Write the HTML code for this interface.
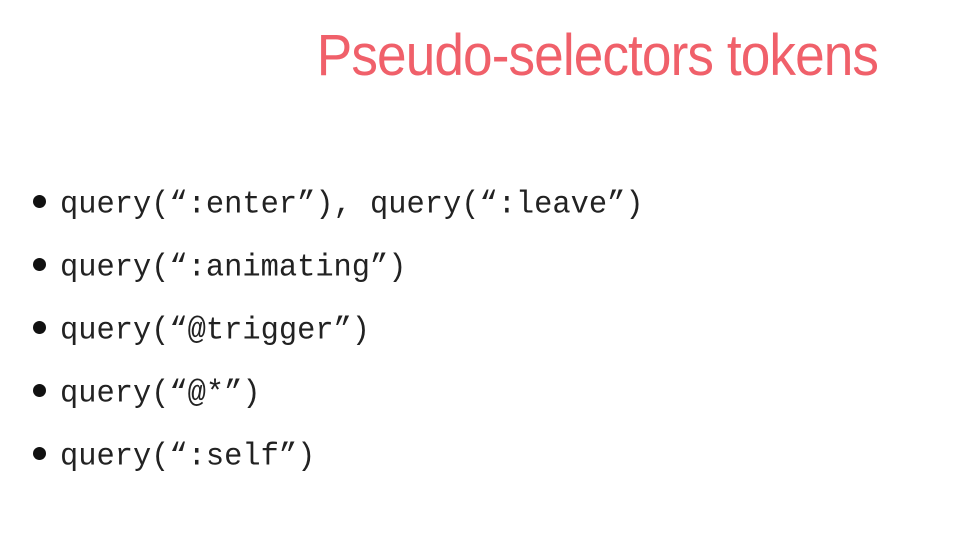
<!DOCTYPE html>
<html><head><meta charset="utf-8"><style>
body{margin:0;width:970px;height:535px;background:#fff;overflow:hidden;position:relative}
.t{position:absolute;right:92px;top:22px;font-family:"Liberation Sans",sans-serif;font-size:58px;color:#f0606a;white-space:nowrap;transform:scaleX(0.917);transform-origin:right top;font-weight:normal;letter-spacing:-1px}
.l{position:absolute;left:60px;font-family:"Liberation Mono",monospace;font-size:30.4px;color:#222;white-space:nowrap;transform:scaleY(1.05)}
.b{position:absolute;left:33px;width:13px;height:13px;border-radius:50%;background:#111}
</style></head><body>
<div class="t">Pseudo-selectors tokens</div>
<div class="b" style="top:195px"></div><div class="l" style="top:188px">query(“:enter”), query(“:leave”)</div>
<div class="b" style="top:258px"></div><div class="l" style="top:251px">query(“:animating”)</div>
<div class="b" style="top:321px"></div><div class="l" style="top:314px">query(“@trigger”)</div>
<div class="b" style="top:384px"></div><div class="l" style="top:377px">query(“@*”)</div>
<div class="b" style="top:447px"></div><div class="l" style="top:440px">query(“:self”)</div>
</body></html>
